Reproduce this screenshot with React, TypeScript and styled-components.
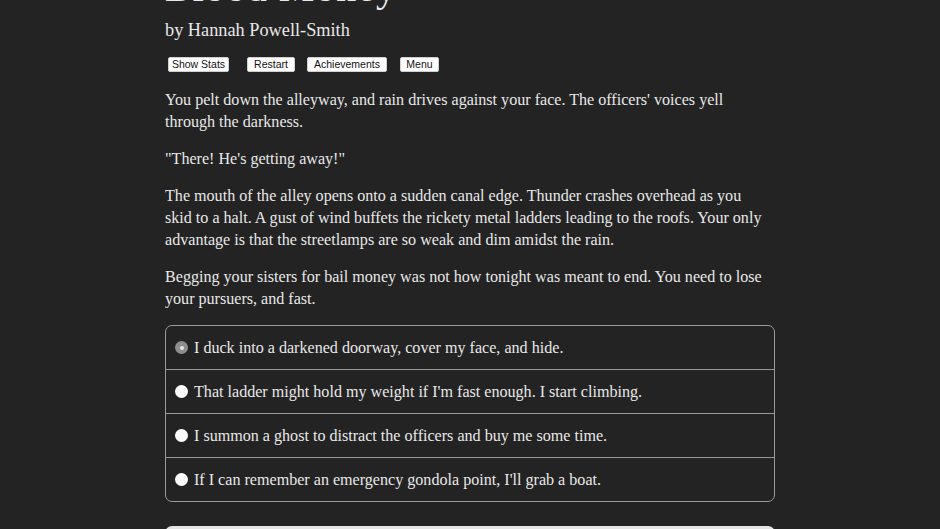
import React from "react";
import styled, { createGlobalStyle } from "styled-components";

const Global = createGlobalStyle`
  html, body { margin: 0; padding: 0; background: #232323; }
  body { overflow: hidden; }
`;

const Page = styled.div`
  width: 610px;
  margin: 0 auto;
  color: #e8e8e8;
  font-family: "Liberation Serif", "DejaVu Serif", serif;
  font-size: 16.1px;
  line-height: 22px;
`;

const Title = styled.h1`
  margin: -31px 0 7px 0;
  font-size: 40px;
  line-height: 38px;
  font-weight: normal;
  letter-spacing: 1px;
`;

const Author = styled.h2`
  margin: 0;
  padding-top: 4px;
  font-size: 18.3px;
  line-height: 24px;
  font-weight: normal;
`;

const Buttons = styled.div`
  display: flex;
  padding: 15px 0 0 3px;
  margin-bottom: 17px;
`;

const SmallButton = styled.button<{ $w: number; $ml?: number }>`
  font-family: "Liberation Sans", Arial, sans-serif;
  font-size: 10.5px;
  line-height: 13px;
  height: 15px;
  width: ${(p) => p.$w}px;
  padding: 0;
  margin-left: ${(p) => p.$ml ?? 0}px;
  background: #ffffff;
  color: #111;
  border: 1px solid #d0d0d0;
  border-radius: 2px;
`;

const Para = styled.p`
  margin: 0 0 15px 0;
`;

const Choices = styled.div`
  margin-top: 13px;
  border: 1px solid #9a9a9a;
  border-radius: 7px;
  overflow: hidden;
`;

const Choice = styled.label`
  display: flex;
  align-items: center;
  height: 43px;
  padding-left: 9px;
  gap: 6px;
  & + & { border-top: 1px solid #9a9a9a; }
`;

const Radio = styled.span<{ $selected?: boolean }>`
  width: 13px;
  height: 13px;
  border-radius: 50%;
  flex: none;
  background: ${(p) => (p.$selected ? "#8f8f8f" : "#ffffff")};
  display: flex;
  align-items: center;
  justify-content: center;
  &::after {
    content: "";
    width: 4px;
    height: 4px;
    border-radius: 50%;
    background: ${(p) => (p.$selected ? "#e6e6e6" : "transparent")};
  }
`;

const NextButton = styled.div`
  margin-top: 24px;
  height: 30px;
  background: #e4e4e4;
  border-radius: 7px;
`;

const choices = [
  "I duck into a darkened doorway, cover my face, and hide.",
  "That ladder might hold my weight if I'm fast enough. I start climbing.",
  "I summon a ghost to distract the officers and buy me some time.",
  "If I can remember an emergency gondola point, I'll grab a boat.",
];

export default function App() {
  return (
    <>
      <Global />
      <Page>
        <Title>Blood Money</Title>
        <Author>by Hannah Powell-Smith</Author>
        <Buttons>
          <SmallButton $w={61}>Show Stats</SmallButton>
          <SmallButton $w={48} $ml={18}>Restart</SmallButton>
          <SmallButton $w={80} $ml={12}>Achievements</SmallButton>
          <SmallButton $w={39} $ml={13}>Menu</SmallButton>
        </Buttons>
        <Para>
          You pelt down the alleyway, and rain drives against your face. The officers' voices yell
          <br />
          through the darkness.
        </Para>
        <Para>"There! He's getting away!"</Para>
        <Para>
          The mouth of the alley opens onto a sudden canal edge. Thunder crashes overhead as you
          <br />
          skid to a halt. A gust of wind buffets the rickety metal ladders leading to the roofs. Your only
          <br />
          advantage is that the streetlamps are so weak and dim amidst the rain.
        </Para>
        <Para>
          Begging your sisters for bail money was not how tonight was meant to end. You need to lose
          <br />
          your pursuers, and fast.
        </Para>
        <Choices>
          {choices.map((c, i) => (
            <Choice key={i}>
              <Radio $selected={i === 0} />
              {c}
            </Choice>
          ))}
        </Choices>
        <NextButton />
      </Page>
    </>
  );
}
